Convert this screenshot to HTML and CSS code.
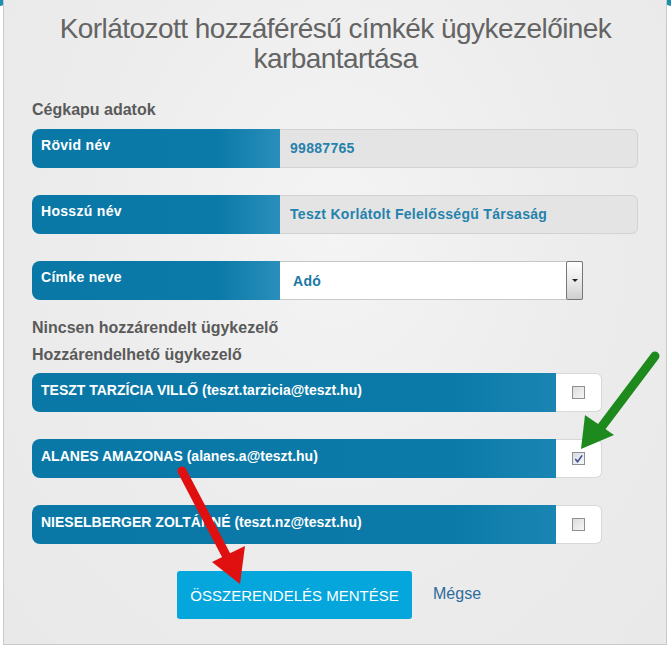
FILE: index.html
```html
<!DOCTYPE html>
<html lang="hu">
<head>
<meta charset="utf-8">
<title>Korlátozott hozzáférésű címkék</title>
<link rel="stylesheet" href="styles.css">
</head>
<body>
<div class="corner corner-l"></div>
<div class="corner corner-r"></div>
<div class="panel">
  <h1 class="title">Korlátozott hozzáférésű címkék ügykezelőinek<br>karbantartása</h1>
  <div class="section">Cégkapu adatok</div>
  <div class="row">
    <div class="label">Rövid név</div>
    <div class="value">99887765</div>
  </div>
  <div class="row">
    <div class="label">Hosszú név</div>
    <div class="value">Teszt Korlátolt Felelősségű Társaság</div>
  </div>
  <div class="row">
    <div class="label">Címke neve</div>
    <div class="select"><span class="select-text">Adó</span><span class="select-btn"><span class="caret"></span></span></div>
  </div>
  <div class="note">Nincsen hozzárendelt ügykezelő</div>
  <div class="note note2">Hozzárendelhető ügykezelő</div>
  <div class="user">
    <div class="user-name">TESZT TARZÍCIA VILLŐ (teszt.tarzicia@teszt.hu)</div>
    <div class="user-check"><span class="cb"></span></div>
  </div>
  <div class="user">
    <div class="user-name">ALANES AMAZONAS (alanes.a@teszt.hu)</div>
    <div class="user-check"><span class="cb checked"><svg viewBox="0 0 12 12" width="12" height="12"><path d="M2.5 6 L5 9 L10 2" fill="none" stroke="#3a4a80" stroke-width="1.6"/></svg></span></div>
  </div>
  <div class="user">
    <div class="user-name">NIESELBERGER ZOLTÁNNÉ (teszt.nz@teszt.hu)</div>
    <div class="user-check"><span class="cb"></span></div>
  </div>
  <div class="actions">
    <button class="save">ÖSSZERENDELÉS MENTÉSE</button>
    <a class="cancel">Mégse</a>
  </div>
</div>
<svg class="arrow arrow-green" width="90" height="110" viewBox="0 0 90 110">
  <line x1="79" y1="9" x2="24" y2="82" stroke="#1e8a1e" stroke-width="9" stroke-linecap="round"/>
  <polygon points="5,102 9,68 38,88" fill="#1e8a1e"/>
</svg>
<svg class="arrow arrow-red" width="90" height="130" viewBox="0 0 90 130">
  <line x1="12" y1="9" x2="56" y2="93" stroke="#e01010" stroke-width="9" stroke-linecap="round"/>
  <polygon points="70,122 42,100 75,84" fill="#e01010"/>
</svg>
</body>
</html>
```
FILE: styles.css
```css
html, body {
  margin: 0;
  padding: 0;
  background: #ffffff;
}
body {
  position: relative;
  width: 671px;
  height: 651px;
  overflow: hidden;
  font-family: "Liberation Sans", Arial, sans-serif;
}
.corner {
  position: absolute;
  top: 0;
  width: 6px;
  height: 6px;
  background: #1a8fb0;
}
.corner-l { left: 0; border-bottom-right-radius: 6px; }
.corner-r { right: 0; border-bottom-left-radius: 6px; }
.panel {
  position: relative;
  margin: 0 4px 0 3px;
  height: 645px;
  box-sizing: border-box;
  border: 1px solid #c9c9c9;
  border-top: none;
  background: radial-gradient(ellipse at 50% 35%, #f4f4f4 0%, #ececec 55%, #e9e9e9 100%);
  padding: 14px 27px 0 28px;
}
.title {
  margin: 0;
  text-align: center;
  font-weight: normal;
  font-size: 28px;
  line-height: 30px;
  color: #646464;
  letter-spacing: -0.55px;
}
.section, .note {
  font-weight: bold;
  font-size: 16px;
  color: #5a5a5a;
}
.section {
  margin-top: 26px;
  line-height: 20px;
}
.row {
  display: flex;
  height: 39px;
  margin-top: 9px;
  margin-bottom: 27px;
  width: 606px;
}
.row + .row { margin-top: 0; }
.label {
  width: 248px;
  flex: none;
  box-sizing: border-box;
  padding: 8px 0 0 9px;
  background: linear-gradient(90deg, #0a78a6 0%, #0b7aa8 75%, #2a8ebb 100%);
  border-radius: 8px 0 0 8px;
  color: #fff;
  font-weight: bold;
  font-size: 14px;
  letter-spacing: 0.3px;
}
.value {
  flex: 1;
  box-sizing: border-box;
  border: 1px solid #d2d2d2;
  border-left: none;
  border-radius: 0 6px 6px 0;
  background: #e4e4e4;
  padding: 10px 0 0 10px;
  color: #2582ac;
  font-weight: bold;
  font-size: 14px;
  letter-spacing: 0.3px;
}
.select {
  display: flex;
  width: 303px;
  box-sizing: border-box;
  background: #fff;
  border: 1px solid #c8c8c8;
  border-left: none;
}
.select-text {
  flex: 1;
  padding: 11px 0 0 13px;
  color: #1a78a6;
  font-weight: bold;
  font-size: 14px;
  letter-spacing: 0.3px;
}
.select-btn {
  width: 15px;
  border-radius: 2px;
  background: linear-gradient(180deg, #ffffff 0%, #e6e6e6 60%, #cfcfcf 100%);
  display: flex;
  align-items: center;
  justify-content: center;
  margin: -1px -1px -1px 0;
  border: 1px solid #777;
}
.caret {
  width: 0;
  height: 0;
  border-left: 3px solid transparent;
  border-right: 3px solid transparent;
  border-top: 3px solid #222;
}
.row:nth-of-type(4) { margin-bottom: 18px; }
.note {
  line-height: 20px;
}
.note2 {
  margin-top: 7px;
  margin-bottom: 8px;
}
.user {
  display: flex;
  width: 570px;
  height: 39px;
  margin-bottom: 27px;
}
.user-name {
  flex: none;
  width: 524px;
  box-sizing: border-box;
  padding: 9px 0 0 9px;
  background: linear-gradient(90deg, #0a78a6 0%, #0b7aa8 80%, #1a85b3 100%);
  border-radius: 8px 0 0 8px;
  color: #fff;
  font-weight: bold;
  font-size: 14px;
}
.user-check {
  flex: 1;
  background: #fff;
  border: 1px solid #d8d8d8;
  border-left: none;
  border-radius: 0 6px 6px 0;
  display: flex;
  align-items: center;
  justify-content: center;
}
.cb {
  width: 11px;
  height: 11px;
  border: 1px solid #8f8f8f;
  background: linear-gradient(135deg, #dcdcdc, #f6f6f6);
  display: flex;
  align-items: center;
  justify-content: center;
}
.cb.checked { background: linear-gradient(135deg, #d6dbe6, #f4f6fa); }
.cb svg { display: block; }
.actions {
  display: flex;
  align-items: center;
  margin-top: 1px;
  padding-left: 145px;
}
.save {
  width: 235px;
  height: 48px;
  border: none;
  border-radius: 3px;
  background: #04a6dc;
  color: #fff;
  font-family: "Liberation Sans", Arial, sans-serif;
  font-size: 15px;
  padding: 0;
}
.cancel {
  margin-left: 21px;
  margin-top: -2px;
  color: #2d6c9c;
  font-size: 16px;
}
.arrow {
  position: absolute;
}
.arrow-green { left: 576px; top: 347px; }
.arrow-red { left: 170px; top: 462px; }
```
